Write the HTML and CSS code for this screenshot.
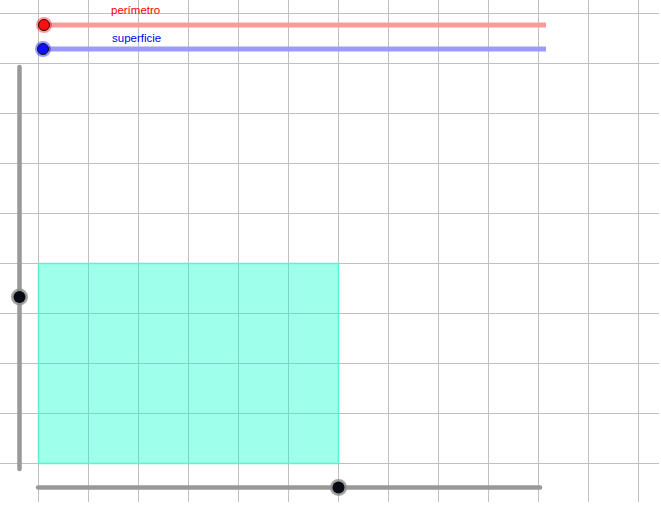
FILE: index.html
```html
<!DOCTYPE html>
<html lang="es">
<head>
<meta charset="utf-8">
<title>Perímetro y superficie</title>
<link rel="stylesheet" href="styles.css">
</head>
<body>
<div class="applet">
<svg class="canvas" width="661" height="505" viewBox="0 0 661 505" xmlns="http://www.w3.org/2000/svg">
  <rect x="0" y="0" width="661" height="505" fill="#ffffff"/>
  <g class="grid" stroke="#c0c0c0" stroke-width="1">
    <line x1="38.5" y1="0" x2="38.5" y2="502"/>
    <line x1="88.5" y1="0" x2="88.5" y2="502"/>
    <line x1="138.5" y1="0" x2="138.5" y2="502"/>
    <line x1="188.5" y1="0" x2="188.5" y2="502"/>
    <line x1="238.5" y1="0" x2="238.5" y2="502"/>
    <line x1="288.5" y1="0" x2="288.5" y2="502"/>
    <line x1="338.5" y1="0" x2="338.5" y2="502"/>
    <line x1="388.5" y1="0" x2="388.5" y2="502"/>
    <line x1="438.5" y1="0" x2="438.5" y2="502"/>
    <line x1="488.5" y1="0" x2="488.5" y2="502"/>
    <line x1="538.5" y1="0" x2="538.5" y2="502"/>
    <line x1="588.5" y1="0" x2="588.5" y2="502"/>
    <line x1="638.5" y1="0" x2="638.5" y2="502"/>
    <line x1="0" y1="13.5" x2="659" y2="13.5"/>
    <line x1="0" y1="63.5" x2="659" y2="63.5"/>
    <line x1="0" y1="113.5" x2="659" y2="113.5"/>
    <line x1="0" y1="163.5" x2="659" y2="163.5"/>
    <line x1="0" y1="213.5" x2="659" y2="213.5"/>
    <line x1="0" y1="263.5" x2="659" y2="263.5"/>
    <line x1="0" y1="313.5" x2="659" y2="313.5"/>
    <line x1="0" y1="363.5" x2="659" y2="363.5"/>
    <line x1="0" y1="413.5" x2="659" y2="413.5"/>
    <line x1="0" y1="463.5" x2="659" y2="463.5"/>
  </g>

  <!-- rectangle -->
  <rect x="38.5" y="263.5" width="300" height="200" fill="rgb(0,255,200)" fill-opacity="0.38" stroke="#5ff0cf" stroke-width="1.5"/>

  <!-- perimetro slider -->
  <line x1="44" y1="25" x2="546" y2="25" stroke="#ff9a9a" stroke-width="5"/>
  <circle cx="44" cy="25" r="8" fill="#ff0000" fill-opacity="0.4"/>
  <circle cx="44" cy="25" r="5.5" fill="#ff1010" stroke="#111" stroke-width="1"/>
  <text class="lbl red" x="111" y="14">perímetro</text>

  <!-- superficie slider -->
  <line x1="43" y1="49" x2="546" y2="49" stroke="#9a9aff" stroke-width="5"/>
  <circle cx="43" cy="49" r="8" fill="#0000ff" fill-opacity="0.4"/>
  <circle cx="43" cy="49" r="5.5" fill="#1010ff" stroke="#111" stroke-width="1"/>
  <text class="lbl blue" x="112" y="42">superficie</text>

  <!-- vertical slider -->
  <line x1="19.5" y1="67" x2="19.5" y2="469" stroke="#999999" stroke-width="4.5" stroke-linecap="round"/>
  <circle cx="19.5" cy="297" r="8.5" fill="#8a8a8a" fill-opacity="0.8"/>
  <circle cx="19.5" cy="297" r="6" fill="#0a0a14"/>

  <!-- horizontal slider -->
  <line x1="38" y1="487.5" x2="540" y2="487.5" stroke="#999999" stroke-width="4.5" stroke-linecap="round"/>
  <circle cx="338.5" cy="487.5" r="8.5" fill="#8a8a8a" fill-opacity="0.8"/>
  <circle cx="338.5" cy="487.5" r="6" fill="#0a0a14"/>
</svg>
</div>
</body>
</html>
```

FILE: styles.css
```css
html, body {
  margin: 0;
  padding: 0;
  background: #ffffff;
}

.applet {
  width: 661px;
  height: 505px;
  overflow: hidden;
}

.canvas {
  display: block;
}

.lbl {
  font-family: "Liberation Sans", Arial, sans-serif;
  font-size: 11.5px;
}

.red {
  fill: #ff0000;
}

.blue {
  fill: #0000ff;
}
```
